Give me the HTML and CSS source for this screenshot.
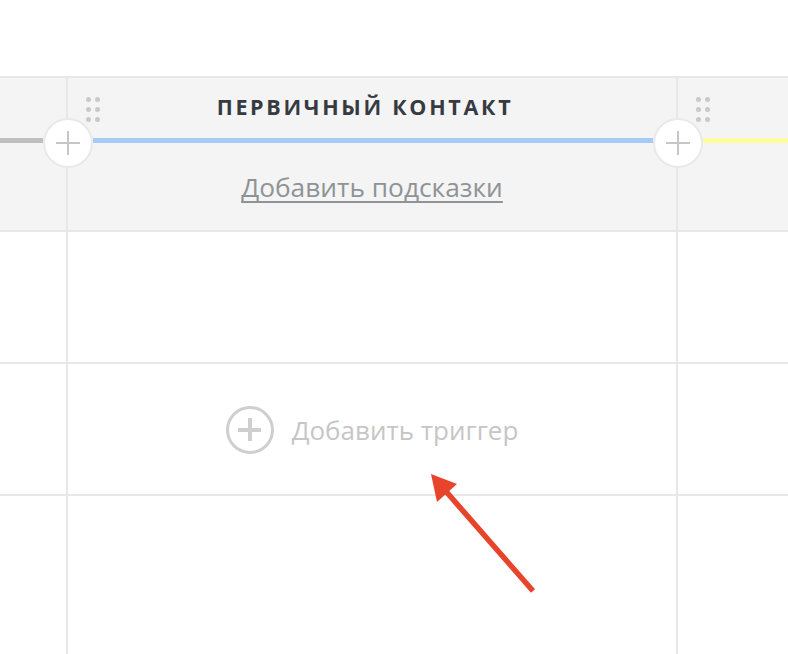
FILE: index.html
```html
<!DOCTYPE html>
<html lang="ru">
<head>
<meta charset="utf-8">
<title>Воронка</title>
<link rel="stylesheet" href="styles.css">
</head>
<body>
<div class="page">
  <div class="board">
    <div class="row head">
      <div class="cell cell-side"></div>
      <div class="cell cell-main">
        <span class="handle"><i></i><i></i><i></i><i></i><i></i><i></i></span>
        <h2 class="stage-title">Первичный контакт</h2>
        <a class="hint-link" href="#">Добавить подсказки</a>
      </div>
      <div class="cell cell-rest">
        <span class="handle"><i></i><i></i><i></i><i></i><i></i><i></i></span>
      </div>
      <div class="track">
        <span class="seg seg-gray"></span>
        <button class="add-stage" type="button" aria-label="Добавить этап"></button>
        <span class="seg seg-blue"></span>
        <button class="add-stage" type="button" aria-label="Добавить этап"></button>
        <span class="seg seg-yellow"></span>
      </div>
    </div>
    <div class="row body-row">
      <div class="cell cell-side"></div>
      <div class="cell cell-main"></div>
      <div class="cell cell-rest"></div>
    </div>
    <div class="row body-row">
      <div class="cell cell-side"></div>
      <div class="cell cell-main cell-center">
        <button class="add-trigger" type="button">
          <span class="add-trigger-icon"></span>
          <span>Добавить триггер</span>
        </button>
      </div>
      <div class="cell cell-rest"></div>
    </div>
    <div class="row body-row last">
      <div class="cell cell-side"></div>
      <div class="cell cell-main"></div>
      <div class="cell cell-rest"></div>
    </div>
  </div>
  <svg class="pointer" width="788" height="654" viewBox="0 0 788 654" aria-hidden="true">
    <line x1="533" y1="591" x2="443" y2="488" stroke="#e8432b" stroke-width="5.5"/>
    <polygon points="431,474 457,484 437,502" fill="#e8432b"/>
  </svg>
</div>
</body>
</html>
```

FILE: styles.css
```css
* {
  box-sizing: border-box;
}

html,
body {
  margin: 0;
  padding: 0;
  background: #ffffff;
}

body {
  font-family: "Open Sans", "Noto Sans", sans-serif;
  overflow: hidden;
}

.page {
  position: relative;
  width: 788px;
  height: 654px;
  padding-top: 76px;
}

.board {
  border-top: 2px solid #e8e8e8;
}

.row {
  display: grid;
  grid-template-columns: 68px 610px 1fr;
  border-bottom: 2px solid #e8e8e8;
}

.row.last {
  border-bottom: 0;
  height: 160px;
}

.cell {
  position: relative;
}

.cell-side,
.cell-main {
  border-right: 2px solid #e8e8e8;
}

/* stage header */
.head {
  position: relative;
  height: 154px;
  background: #f4f4f4;
}

.cell-main {
  display: flex;
  flex-direction: column;
  align-items: center;
}

.head .cell-main {
  padding-top: 92px;
}

.stage-title {
  position: absolute;
  top: 14px;
  left: 0;
  right: 0;
  margin: 0;
  padding-right: 14px;
  text-align: center;
  font-size: 21.5px;
  font-weight: 700;
  letter-spacing: 2.7px;
  text-transform: uppercase;
  color: #363a41;
  line-height: 30px;
}

.hint-link {
  font-size: 26.3px;
  line-height: 34px;
  color: #8f9396;
  text-decoration: underline;
  text-decoration-skip-ink: none;
  text-underline-offset: 4px;
  text-decoration-thickness: 2px;
}

.handle {
  position: absolute;
  top: 19px;
  left: 18px;
  display: grid;
  grid-template-columns: 5px 5px;
  column-gap: 4px;
  row-gap: 5px;
}

.handle i {
  display: block;
  width: 5px;
  height: 5px;
  border-radius: 50%;
  background: #c9c9c9;
}

.track {
  position: absolute;
  left: 0;
  right: 0;
  top: 40px;
  display: flex;
  align-items: center;
  height: 50px;
}

.seg {
  display: block;
  height: 5px;
  margin-top: -5px;
}

.seg-gray {
  width: 43px;
  background: #bfbfbf;
}

.seg-blue {
  width: 560px;
  background: #a6cbf7;
}

.seg-yellow {
  flex: 1;
  background: #fdfd9b;
}

.add-stage {
  position: relative;
  width: 50px;
  height: 50px;
  flex: none;
  padding: 0;
  border: 2px solid #e9e9e9;
  border-radius: 50%;
  background: #ffffff;
  cursor: pointer;
}

.add-stage::before,
.add-stage::after {
  content: "";
  position: absolute;
  left: 50%;
  top: 50%;
  background: #c6c6c6;
}

.add-stage::before {
  width: 24px;
  height: 2px;
  margin: -1px 0 0 -12px;
}

.add-stage::after {
  width: 2px;
  height: 24px;
  margin: -12px 0 0 -1px;
}

/* body rows */
.body-row {
  height: 132px;
}

.cell-center {
  justify-content: center;
}

.add-trigger {
  display: flex;
  align-items: center;
  gap: 18px;
  padding: 0;
  border: 0;
  background: none;
  font-family: inherit;
  font-size: 26px;
  color: #c6c6c6;
  cursor: pointer;
  margin-top: 1px;
}

.add-trigger-icon {
  position: relative;
  flex: none;
  width: 48px;
  height: 48px;
  border: 3px solid #cfcfcf;
  border-radius: 50%;
}

.add-trigger-icon::before,
.add-trigger-icon::after {
  content: "";
  position: absolute;
  left: 50%;
  top: 50%;
  background: #cfcfcf;
}

.add-trigger-icon::before {
  width: 23px;
  height: 4px;
  margin: -2px 0 0 -11.5px;
}

.add-trigger-icon::after {
  width: 4px;
  height: 23px;
  margin: -11.5px 0 0 -2px;
}

.pointer {
  position: absolute;
  left: 0;
  top: 0;
  pointer-events: none;
}
```
